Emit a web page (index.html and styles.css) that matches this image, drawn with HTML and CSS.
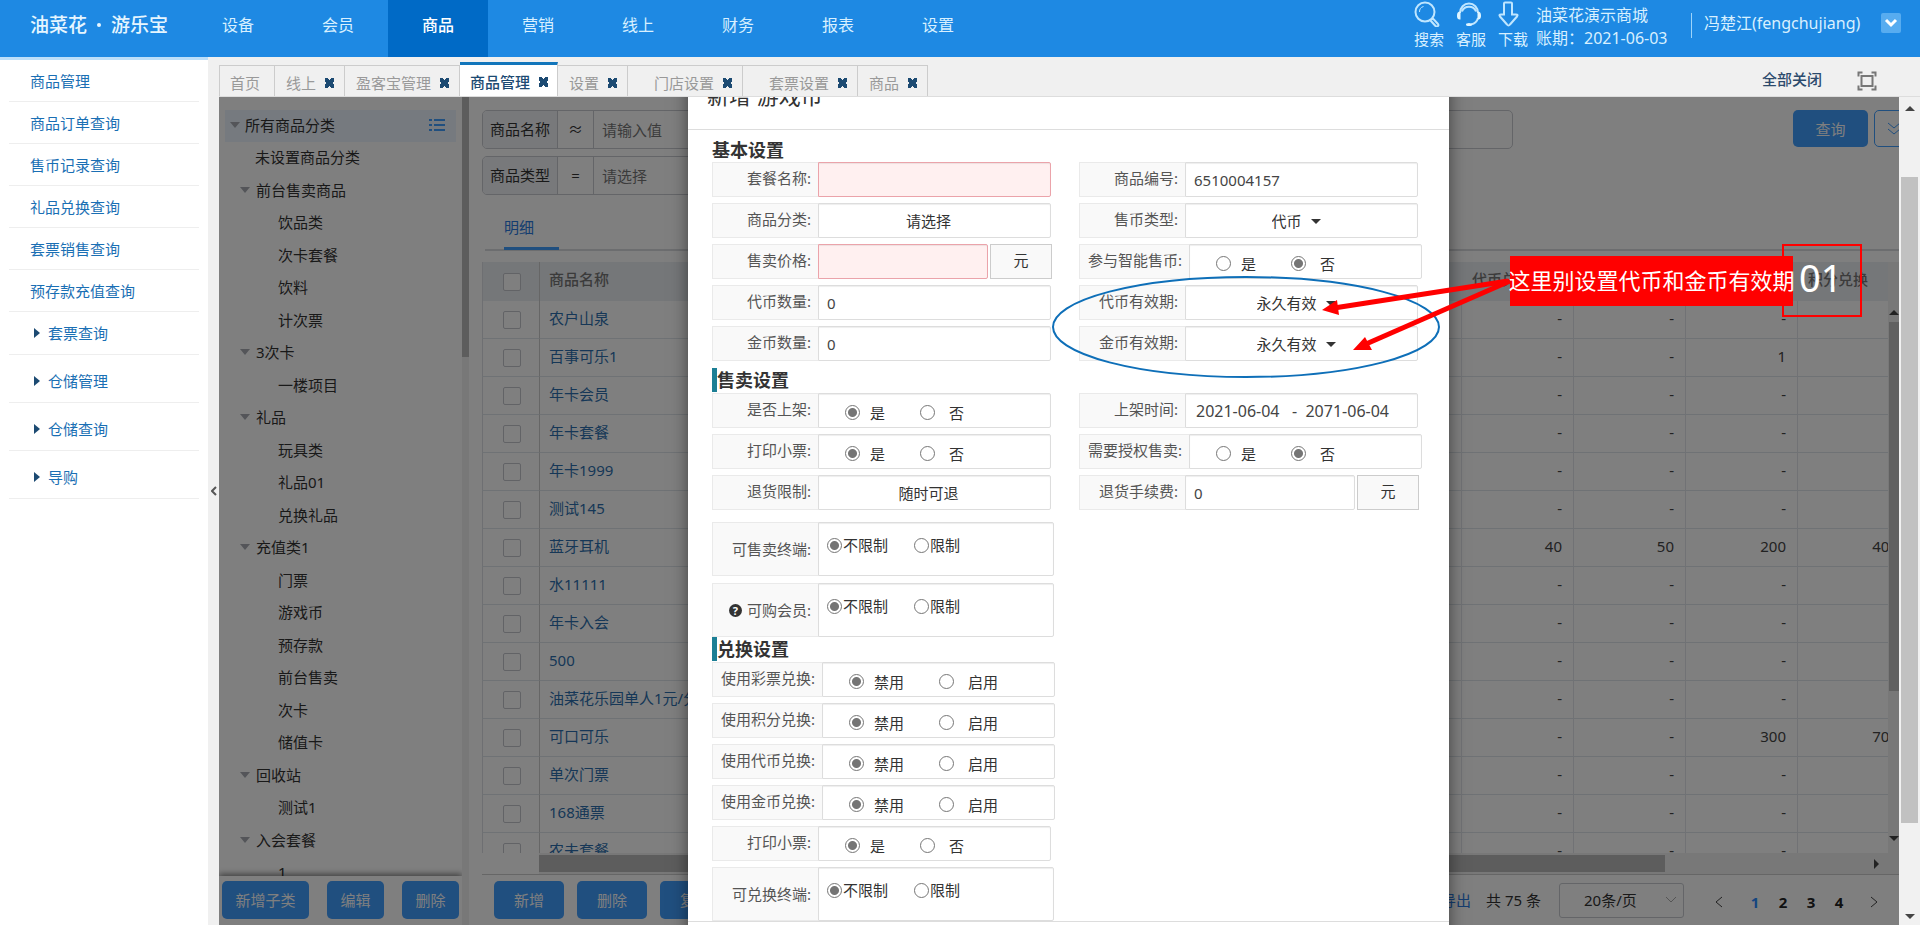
FILE: index.html
```html
<!DOCTYPE html>
<html lang="zh-CN">
<head>
<meta charset="utf-8">
<title>油菜花 · 游乐宝</title>
<link rel="stylesheet" href="styles.css">
</head>
<body>
<header class="topbar">
  <div class="logo"><span>油菜花</span><i class="logo-dot"></i><span>游乐宝</span></div>
  <nav class="mainnav">
    <a href="#">设备</a><a href="#">会员</a><a href="#" class="active">商品</a><a href="#">营销</a><a href="#">线上</a><a href="#">财务</a><a href="#">报表</a><a href="#">设置</a>
  </nav>
  <div class="tools">
    <a href="#"><svg width="26" height="26" viewBox="0 0 26 26"><circle cx="11" cy="11" r="9.5"/><path d="M5.500 11a5.500 5.500 0 0 1 4-5.500" class="thin"/><path d="M16.500 19.500l2.500-2 5 5.500a1.500 1.500 0 0 1-2.500 2z"/></svg>搜索</a>
    <a href="#"><svg width="26" height="26" viewBox="0 0 26 26"><path d="M4 12a9 9.500 0 0 1 18 0M6 10.500a7.500 7.500 0 0 1 14 0M22 17c-1 4-3 5.500-7 6.500"/><path class="solid" d="M4.500 10.500v8C1.500 18.500 1 17 1 14.500s1-4 3.500-4zM21.500 10.500v8c3 0 3.500-1.500 3.500-4s-1-4-3.500-4z"/><ellipse class="solid" cx="13" cy="23.500" rx="3" ry="1.500"/></svg>客服</a>
    <a href="#"><svg width="26" height="26" viewBox="0 0 26 26"><path d="M6 2.500q0-1 1-1h6q1 0 1 1v11h4q2.500 0 1 2l-7 8q-1.500 2-3 0l-7-8q-1.500-2 1-2h3z"/></svg>下载</a>
  </div>
  <div class="store"><span>油菜花演示商城</span><span>账期：2021-06-03</span></div>
  <div class="user">冯楚江(fengchujiang)</div>
  <button class="user-menu" aria-label="用户菜单"><svg width="14" height="10" viewBox="0 0 14 10"><path d="M2 2l5 5 5-5"/></svg></button>
</header>
<div class="page">
  <aside class="sidebar">
    <a href="#">商品管理</a>
    <a href="#">商品订单查询</a>
    <a href="#">售币记录查询</a>
    <a href="#">礼品兑换查询</a>
    <a href="#">套票销售查询</a>
    <a href="#">预存款充值查询</a>
    <a href="#" class="group">套票查询</a>
    <a href="#" class="group tall">仓储管理</a>
    <a href="#" class="group tall">仓储查询</a>
    <a href="#" class="group tall">导购</a>
  </aside>
  <button class="collapse" aria-label="收起菜单"><svg width="6" height="10" viewBox="0 0 6 10"><path d="M5 1L1 5l4 4"/></svg></button>
  <main class="workspace">
    <div class="tabbar">
      <a href="#" class="tab">首页</a>
      <a href="#" class="tab">线上<b class="x"></b></a>
      <a href="#" class="tab">盈客宝管理<b class="x"></b></a>
      <a href="#" class="tab active">商品管理<b class="x"></b></a>
      <a href="#" class="tab">设置<b class="x"></b></a>
      <a href="#" class="tab wide">门店设置<b class="x"></b></a>
      <a href="#" class="tab wide">套票设置<b class="x"></b></a>
      <a href="#" class="tab">商品<b class="x"></b></a>
      <a href="#" class="close-all">全部关闭</a>
      <button class="full" aria-label="全屏"><svg width="20" height="20" viewBox="0 0 20 20"><path d="M1.500 5.500v-4h4M14.500 1.500h4v4M18.500 14.500v4h-4M5.500 18.500h-4v-4"/><rect x="4.500" y="5" width="11" height="10"/></svg></button>
    </div>
    <div class="stage">
      <div class="frame">
        <section class="tree-panel">
          <ul class="tree">
            <li class="root open">所有商品分类<svg width="16" height="14" viewBox="0 0 16 14"><path d="M0 2h3M5 2h11M0 7h3M5 7h11M0 12h3M5 12h11"/></svg></li>
            <li>未设置商品分类</li>
            <li class="open">前台售卖商品</li>
            <li class="leaf">饮品类</li>
            <li class="leaf">次卡套餐</li>
            <li class="leaf">饮料</li>
            <li class="leaf">计次票</li>
            <li class="open">3次卡</li>
            <li class="leaf">一楼项目</li>
            <li class="open">礼品</li>
            <li class="leaf">玩具类</li>
            <li class="leaf">礼品01</li>
            <li class="leaf">兑换礼品</li>
            <li class="open">充值类1</li>
            <li class="leaf">门票</li>
            <li class="leaf">游戏币</li>
            <li class="leaf">预存款</li>
            <li class="leaf">前台售卖</li>
            <li class="leaf">次卡</li>
            <li class="leaf">储值卡</li>
            <li class="open">回收站</li>
            <li class="leaf">测试1</li>
            <li class="open">入会套餐</li>
            <li class="leaf">1</li>
          </ul>
          <div class="tree-actions">
            <button class="btn">新增子类</button><button class="btn">编辑</button><button class="btn">删除</button>
          </div>
        </section>
        <div class="tree-scroll"><i></i></div>
        <section class="list-panel">
          <div class="filters">
            <div class="filter-set">
              <div class="filter"><label for="f1">商品名称</label><span>≈</span><input id="f1" placeholder="请输入值"></div>
              <div class="filter"><input aria-label="关键字"></div>
              <div class="filter"><label for="f2">商品类型</label><span>=</span><input id="f2" placeholder="请选择"></div>
            </div>
            <button class="btn query">查询</button>
            <button class="more" aria-label="展开筛选"><svg width="16" height="14" viewBox="0 0 16 14"><path d="M2 1l6 5 6-5M2 7l6 5 6-5"/></svg></button>
          </div>
          <div class="subtabs"><a href="#">明细</a></div>
          <div class="grid-area">
            <div class="grid-clip">
              <table class="goods">
                <colgroup><col class="c-check"><col class="c-name"><col class="c-num"><col class="c-num"><col class="c-num"><col class="c-num"></colgroup>
                <thead><tr><th><input type="checkbox" aria-label="全选"></th><th>商品名称</th><th>代币兑换</th><th></th><th></th><th>积分兑换</th></tr></thead>
                <tbody>
                  <tr><td><input type="checkbox" aria-label="选择"></td><td><a href="#">农户山泉</a></td><td>-</td><td>-</td><td>-</td><td></td></tr>
                  <tr><td><input type="checkbox" aria-label="选择"></td><td><a href="#">百事可乐1</a></td><td>-</td><td>-</td><td>1</td><td></td></tr>
                  <tr><td><input type="checkbox" aria-label="选择"></td><td><a href="#">年卡会员</a></td><td>-</td><td>-</td><td>-</td><td></td></tr>
                  <tr><td><input type="checkbox" aria-label="选择"></td><td><a href="#">年卡套餐</a></td><td>-</td><td>-</td><td>-</td><td></td></tr>
                  <tr><td><input type="checkbox" aria-label="选择"></td><td><a href="#">年卡1999</a></td><td>-</td><td>-</td><td>-</td><td></td></tr>
                  <tr><td><input type="checkbox" aria-label="选择"></td><td><a href="#">测试145</a></td><td>-</td><td>-</td><td>-</td><td></td></tr>
                  <tr><td><input type="checkbox" aria-label="选择"></td><td><a href="#">蓝牙耳机</a></td><td>40</td><td>50</td><td>200</td><td>400</td></tr>
                  <tr><td><input type="checkbox" aria-label="选择"></td><td><a href="#">水11111</a></td><td>-</td><td>-</td><td>-</td><td></td></tr>
                  <tr><td><input type="checkbox" aria-label="选择"></td><td><a href="#">年卡入会</a></td><td>-</td><td>-</td><td>-</td><td></td></tr>
                  <tr><td><input type="checkbox" aria-label="选择"></td><td><a href="#">500</a></td><td>-</td><td>-</td><td>-</td><td></td></tr>
                  <tr><td><input type="checkbox" aria-label="选择"></td><td><a href="#">油菜花乐园单人1元/分</a></td><td>-</td><td>-</td><td>-</td><td></td></tr>
                  <tr><td><input type="checkbox" aria-label="选择"></td><td><a href="#">可口可乐</a></td><td>-</td><td>-</td><td>300</td><td>700</td></tr>
                  <tr><td><input type="checkbox" aria-label="选择"></td><td><a href="#">单次门票</a></td><td>-</td><td>-</td><td>-</td><td></td></tr>
                  <tr><td><input type="checkbox" aria-label="选择"></td><td><a href="#">168通票</a></td><td>-</td><td>-</td><td>-</td><td></td></tr>
                  <tr><td><input type="checkbox" aria-label="选择"></td><td><a href="#">农夫套餐</a></td><td>-</td><td>-</td><td>-</td><td></td></tr>
                </tbody>
              </table>
            </div>
            <div class="grid-vscroll"><b class="tri up"></b><i></i><b class="tri down"></b></div>
            <div class="grid-hscroll"><i></i><b class="tri right"></b></div>
          </div>
          <div class="list-footer">
            <button class="btn">新增</button><button class="btn">删除</button><button class="btn">复制</button>
            <div class="pager">
              <a href="#" class="export">导出</a>
              <span>共 75 条</span>
              <div class="size"><select aria-label="每页条数"><option>20条/页</option></select><svg width="12" height="8" viewBox="0 0 12 8"><path d="M1 1l5 5 5-5"/></svg></div>
              <button class="arrow" aria-label="上一页"><svg width="8" height="12" viewBox="0 0 8 12"><path d="M7 1L1 6l6 5"/></svg></button>
              <a href="#" class="num on">1</a><a href="#" class="num">2</a><a href="#" class="num">3</a><a href="#" class="num">4</a>
              <button class="arrow" aria-label="下一页"><svg width="8" height="12" viewBox="0 0 8 12"><path d="M1 1l6 5-6 5"/></svg></button>
            </div>
          </div>
        </section>
        <div class="overlay">
          <div class="modal" role="dialog" aria-labelledby="dlg">
            <h2 class="modal-title" id="dlg">新增 游戏币</h2>
            <form class="modal-body">
              <h3 class="plain">基本设置</h3>
              <div class="fields">
                <div class="field"><label for="i1">套餐名称:</label><input id="i1" class="ctl bad"></div>
                <div class="field"><label for="i2">商品编号:</label><input id="i2" class="ctl" value="6510004157"></div>
                <div class="field"><label for="i3">商品分类:</label><div class="ctl pick"><select id="i3"><option>请选择</option></select></div></div>
                <div class="field"><label for="i4">售币类型:</label><div class="ctl pick"><select id="i4"><option>代币</option></select><b class="caret"></b></div></div>
                <div class="field"><label for="i5">售卖价格:</label><input id="i5" class="ctl bad short"><span class="unit">元</span></div>
                <div class="field"><span class="lab">参与智能售币:</span><div class="ctl radios"><label><input type="radio" name="r1">是</label><label><input type="radio" name="r1" checked>否</label></div></div>
                <div class="field"><label for="i6">代币数量:</label><input id="i6" class="ctl" value="0"></div>
                <div class="field"><label for="i7">代币有效期:</label><div class="ctl pick"><select id="i7"><option>永久有效</option></select><b class="caret"></b></div></div>
                <div class="field"><label for="i8">金币数量:</label><input id="i8" class="ctl" value="0"></div>
                <div class="field"><label for="i9">金币有效期:</label><div class="ctl pick"><select id="i9"><option>永久有效</option></select><b class="caret"></b></div></div>
              </div>
              <h3>售卖设置</h3>
              <div class="fields">
                <div class="field"><span class="lab">是否上架:</span><div class="ctl radios"><label><input type="radio" name="r2" checked>是</label><label><input type="radio" name="r2">否</label></div></div>
                <div class="field"><label for="i10">上架时间:</label><input id="i10" class="ctl dates" value="2021-06-04   -  2071-06-04"></div>
                <div class="field"><span class="lab">打印小票:</span><div class="ctl radios"><label><input type="radio" name="r3" checked>是</label><label><input type="radio" name="r3">否</label></div></div>
                <div class="field"><span class="lab">需要授权售卖:</span><div class="ctl radios"><label><input type="radio" name="r4">是</label><label><input type="radio" name="r4" checked>否</label></div></div>
                <div class="field"><label for="i11">退货限制:</label><div class="ctl pick"><select id="i11"><option>随时可退</option></select></div></div>
                <div class="field"><label for="i12">退货手续费:</label><input id="i12" class="ctl short" value="0"><span class="unit">元</span></div>
              </div>
              <div class="fields tall-set">
                <div class="field tall"><span class="lab">可售卖终端:</span><div class="ctl radios"><label><input type="radio" name="r5" checked>不限制</label><label><input type="radio" name="r5">限制</label></div></div>
                <div class="field tall"><span class="lab"><b class="help">?</b>可购会员:</span><div class="ctl radios"><label><input type="radio" name="r6" checked>不限制</label><label><input type="radio" name="r6">限制</label></div></div>
              </div>
              <h3 class="tight">兑换设置</h3>
              <div class="fields single">
                <div class="field"><span class="lab">使用彩票兑换:</span><div class="ctl radios"><label><input type="radio" name="r7" checked>禁用</label><label><input type="radio" name="r7">启用</label></div></div>
                <div class="field"><span class="lab">使用积分兑换:</span><div class="ctl radios"><label><input type="radio" name="r8" checked>禁用</label><label><input type="radio" name="r8">启用</label></div></div>
                <div class="field"><span class="lab">使用代币兑换:</span><div class="ctl radios"><label><input type="radio" name="r9" checked>禁用</label><label><input type="radio" name="r9">启用</label></div></div>
                <div class="field"><span class="lab">使用金币兑换:</span><div class="ctl radios"><label><input type="radio" name="r10" checked>禁用</label><label><input type="radio" name="r10">启用</label></div></div>
                <div class="field"><span class="lab">打印小票:</span><div class="ctl radios"><label><input type="radio" name="r11" checked>是</label><label><input type="radio" name="r11">否</label></div></div>
                <div class="field tall"><span class="lab">可兑换终端:</span><div class="ctl radios"><label><input type="radio" name="r12" checked>不限制</label><label><input type="radio" name="r12">限制</label></div></div>
              </div>
            </form>
            <div class="modal-foot"></div>
            <div class="callout-box">01</div>
            <div class="callout-text">这里别设置代币和金币有效期</div>
            <svg class="callout-art" width="860" height="400" viewBox="0 0 860 400">
              <ellipse cx="558" cy="230" rx="193" ry="50" fill="none" stroke="#0e6fb8" stroke-width="2"/>
              <g stroke="#f00" stroke-width="5" fill="#f00">
                <path d="M820 184L646 211"/><path d="M822 184L678 247"/>
              </g>
              <path fill="#f00" d="M634 213l15-10 2 15zM665 253l12-13 7 13z"/>
            </svg>
          </div>
        </div>
      </div>
      <div class="page-scroll"><b class="tri up"></b><i></i><b class="tri down"></b></div>
    </div>
  </main>
</div>
</body>
</html>
```
FILE: styles.css
```css
* { box-sizing: border-box; }
body {
  margin: 0;
  height: 100vh;
  display: flex;
  flex-direction: column;
  overflow: hidden;
  background: #f0f0f0;
  color: #333;
  font: 15px/20px "Noto Sans", "Noto Sans CJK SC", sans-serif;
}
a { color: inherit; text-decoration: none; }
button, input, select { font: inherit; color: inherit; }
button { padding: 0; border: 0; background: none; }
svg { fill: none; flex: none; }
ul, h2, h3 { margin: 0; padding: 0; }

/* top bar */
.topbar {
  flex: none;
  height: 57px;
  display: flex;
  background: #1e89e3;
  color: #d8f0ff;
  font-size: 16px;
}
.logo {
  width: 188px;
  height: 50px;
  padding-left: 30px;
  display: flex;
  align-items: center;
  gap: 10px;
  font-size: 19px;
  font-weight: 500;
  color: #e6f6ff;
}
.logo-dot { width: 4px; height: 4px; border-radius: 2px; background: #e6f6ff; }
.mainnav { display: flex; }
.mainnav a { width: 100px; padding-top: 15px; text-align: center; }
.mainnav .active { background: #006ac6; color: #fff; font-weight: 500; }
.tools { margin-left: auto; display: flex; gap: 12px; font-size: 15px; }
.tools a { width: 30px; padding-top: 1px; line-height: 24px; white-space: nowrap; }
.tools svg { display: block; stroke: #bfe6ff; stroke-width: 2; }
.tools .thin { stroke-width: 1; }
.tools .solid { fill: #e0f5ff; stroke: none; }
.store { margin-left: 8px; padding-top: 4px; width: 155px; display: flex; flex-direction: column; line-height: 23px; white-space: nowrap; }
.user { height: 25px; margin-top: 13px; padding-left: 12px; width: 190px; border-left: 1px solid #9dd4fa; line-height: 21px; white-space: nowrap; }
.user-menu { width: 20px; height: 20px; margin: 13px 19px 0 0; background: #57acf0; border-radius: 2px; }
.user-menu svg { display: block; margin: 0 auto; stroke: #fff; stroke-width: 3; }

/* side menu */
.page { flex: 1; min-height: 0; display: flex; }
.sidebar { width: 208px; padding: 0 9px; background: #fff; border-top: 3px solid #bcdffa; }
.sidebar a {
  display: flex;
  align-items: center;
  height: 42px;
  padding-left: 21px;
  border-bottom: 1px solid #eee;
  color: #1a6fb4;
}
.sidebar .group { height: 43px; }
.sidebar .tall { height: 48px; padding-top: 5px; }
.sidebar .group::before {
  content: "";
  margin: 0 8px 0 4px;
  border: 5px solid transparent;
  border-left: 6px solid #1c4a72;
  border-right: 0;
}
.collapse { width: 11px; display: flex; align-items: center; justify-content: center; }
.collapse svg { stroke: #555; stroke-width: 2; }

/* window tabs */
.workspace { flex: 1; min-width: 0; display: flex; flex-direction: column; }
.tabbar { flex: none; height: 40px; display: flex; align-items: flex-end; border-bottom: 1px solid #ddd; }
.tab {
  height: 31px;
  display: flex;
  align-items: center;
  gap: 9px;
  padding: 4px 10px 0 11px;
  border: 1px solid #ccc;
  border-left-width: 0;
  border-bottom: 0;
  color: #999;
  white-space: nowrap;
}
.tab:first-child { border-left-width: 1px; padding: 4px 14px 0 10px; }
.tab.wide { padding-left: 26px; }
.tab.active { height: 34px; padding: 3px 9px 0 10px; border-top: 3px solid #1276bb; background: #fff; color: #1c4a72; font-weight: 500; }
.x { width: 9px; height: 10px; background: linear-gradient(45deg, transparent 36%, #1c4a72 36% 64%, transparent 64%), linear-gradient(-45deg, transparent 36%, #1c4a72 36% 64%, transparent 64%); }
.close-all { margin: 0 35px 7px auto; color: #2c4a6c; font-weight: 500; }
.full { width: 20px; height: 20px; margin: 0 43px 5px 0; }
.full svg { display: block; stroke: #777; stroke-width: 2; }

/* framed page and its scroll bar */
.stage { flex: 1; min-height: 0; display: flex; }
.frame { position: relative; flex: 1; min-width: 0; display: flex; overflow: hidden; background: #fff; }
.page-scroll { width: 21px; padding: 9px 2px 6px; display: flex; flex-direction: column; align-items: center; background: #f1f1f1; }
.page-scroll i { flex: 1; width: 17px; margin: 66px 0 91px; background: #c1c1c1; }
.tri { border: 5px solid transparent; }
.tri.up { border-top-width: 0; border-bottom-color: #444; }
.tri.down { border-bottom-width: 0; border-top-color: #444; }
.tri.right { border-right-width: 0; border-left-color: #444; }

/* category tree */
.tree-panel { flex: none; width: 243px; display: flex; flex-direction: column; }
.tree { flex: 1; min-height: 0; overflow: hidden; padding: 13px 6px 0; list-style: none; }
.tree li { display: flex; align-items: center; height: 32px; padding: 0 0 3px 30px; }
.tree li:nth-child(even) { height: 33px; }
.tree .leaf { padding-left: 53px; }
.tree .open { padding-left: 15px; }
.tree .open::before { content: ""; margin-right: 6px; border: 5px solid transparent; border-top: 6px solid #a8abb2; border-bottom: 0; }
.tree .root { padding-left: 5px; padding-bottom: 2px; background: #ecf5ff; }
.tree .root::before { margin-right: 5px; }
.tree .root svg { margin: 0 11px 0 auto; stroke: #409eff; stroke-width: 2; }
.tree-actions { flex: none; height: 49px; display: flex; gap: 18px; padding: 5px 3px 6px; box-shadow: 0 -2px 6px rgba(0, 0, 0, .5); background: #fff; }
.btn { height: 38px; padding: 0 13px; border-radius: 5px; background: #409eff; color: #fff; }
.tree-actions .btn { flex: auto; }
.tree-scroll { flex: none; width: 7px; background: #f0f0f0; }
.tree-scroll i { display: block; height: 260px; background: #bbb; }

/* list */
.list-panel { flex: 1; min-width: 0; display: flex; flex-direction: column; padding-left: 13px; }
.filters { display: flex; margin: 13px -15px 0 0; }
.filter-set { width: 1031px; flex: none; display: grid; grid-template-columns: 1fr 1fr; gap: 7px 15px; }
.filter { height: 39px; display: flex; border: 1px solid #c8cad0; border-radius: 5px; overflow: hidden; }
.filter label { width: 75px; padding-top: 8px; text-align: center; background: #f0f2f6; border-right: 1px solid #c8cad0; }
.filter span { width: 36px; padding-top: 8px; text-align: center; border-right: 1px solid #c8cad0; }
.filter input { flex: 1; min-width: 0; padding: 0 8px; border: 0; background: none; }
.filter input::placeholder { color: #777; opacity: 1; }
.query { width: 75px; height: 37px; margin: 0 6px 0 auto; }
.more { width: 40px; height: 37px; border: 1px solid #409eff; border-radius: 5px; }
.more svg { display: block; margin: 0 auto; stroke: #409eff; stroke-width: 1; }
.subtabs { display: flex; margin: 20px 0 11px 3px; padding-left: 19px; border-bottom: 2px solid #d8dade; }
.subtabs a { height: 35px; width: 55px; padding-top: 2px; margin-bottom: -1px; border-bottom: 3px solid #409eff; color: #2a7be0; }
.grid-area { flex: 1; min-height: 0; display: grid; grid-template: minmax(0, 1fr) 21px / minmax(0, 1fr) 11px; border-bottom: 1px solid #ccc; }
.grid-clip { overflow: hidden; }
.goods { table-layout: fixed; width: 1428px; border-collapse: separate; border-spacing: 0; }
.c-check { width: 58px; }
.c-name { width: 922px; }
.c-num { width: 112px; }
.goods th { height: 39px; padding: 0 10px 5px; text-align: left; font-weight: 500; background: #ebeef3; color: #777; }
.goods td { height: 38px; padding: 0 11px 3px; text-align: right; border-bottom: 1px solid #dfe4ea; border-right: 1px solid #e2e5ea; color: #444; }
.goods td:nth-child(2) { padding-left: 9px; text-align: left; color: #2d6fae; }
.goods th:nth-child(2) { padding-left: 9px; }
.goods tr > :first-child { padding: 0 0 0 20px; text-align: left; border-right: 1px solid #ccc; border-left: 1px solid #dcdfe4; }
.goods input { appearance: none; display: block; width: 18px; height: 18px; margin: 0; border: 1px solid #c4c7cd; border-radius: 2px; background: #fff; }
.grid-vscroll { display: flex; flex-direction: column; align-items: flex-end; padding: 48px 0 12px; background: #f0f0f0; }
.grid-vscroll i { flex: 1; width: 10px; margin: 7px 0 145px; background: #c1c1c1; }
.grid-hscroll { grid-column: 1 / -1; display: flex; align-items: center; margin-left: 57px; padding: 2px 20px 2px 0; background: #f0f0f0; }
.grid-hscroll i { width: 84%; height: 17px; margin-right: auto; background: #bbb; }
.list-footer { flex: none; height: 50px; display: flex; align-items: center; gap: 13px; padding-left: 12px; }
.list-footer .btn { width: 70px; }
.pager { margin-left: auto; display: flex; align-items: center; padding-right: 19px; }
.pager .export { color: #2a7be0; margin-right: 15px; }
.size { position: relative; width: 125px; height: 35px; margin: 0 31px 0 18px; }
.size select { appearance: none; width: 100%; height: 100%; padding: 0 24px; border: 1px solid #c8cad0; border-radius: 3px; background: none; }
.size svg { position: absolute; right: 7px; top: 13px; stroke: #aaa; }
.arrow svg { display: block; stroke: #444; stroke-width: 1; }
.arrow { width: 10px; padding-top: 3px; }
.num { width: 28px; padding-top: 4px; text-align: center; font-weight: 700; color: #222; }
.num.on { margin-left: 16px; color: #2a8bff; }
.num + .arrow { margin-left: 17px; }

/* dialog */
.overlay { position: absolute; inset: 0; display: flex; justify-content: center; align-items: flex-start; padding-left: 19px; background: rgba(0, 0, 0, .5); }
.modal { position: relative; flex: none; width: 761px; margin-top: -40px; background: #fff; box-shadow: 0 5px 16px rgba(0, 0, 0, .5); }
.modal-title { height: 73px; padding: 22px 19px 0; line-height: 32px; font-size: 22px; font-weight: 400; border-bottom: 1px solid #ddd; }
.modal-body { padding: 8px 24px 0; }
.modal-foot { height: 60px; border-top: 1px solid #ddd; }
.modal h3 { height: 24px; line-height: 24px; margin: 7px 0 1px; border-left: 5px solid #1c7f95; font-size: 18px; }
.modal h3.plain { margin: 0; border-left: 0; }
.modal h3.tight { margin-top: 0; }
.fields { display: grid; grid-template-columns: 367px 1fr; gap: 6px 0; }
.fields.tall-set { grid-template-columns: 1fr; gap: 7px; margin-top: 12px; }
.fields.single { grid-template-columns: 1fr; }
.field { display: flex; height: 35px; }
.field.tall { height: 54px; }
.field > label, .lab {
  min-width: 106px;
  padding: 0 7px 3px 8px;
  display: flex;
  align-items: center;
  justify-content: flex-end;
  background: #f9f9f9;
  border: 1px solid #eaeaea;
  border-right: 0;
  color: #555;
}
.tall .lab { padding-bottom: 0; }
.ctl { width: 233px; border: 1px solid #ddd; border-radius: 0 2px 2px 0; background: #fff; box-shadow: inset 0 1px 1px rgba(0, 0, 0, .07); }
input.ctl { padding: 0 8px; color: #444; }
input.dates { padding: 0 10px; font-size: 16px; }
.ctl.bad { background: #fff0f0; border-color: #eba3aa; }
.ctl.short { width: 170px; }
.tall .ctl { width: 236px; }
.unit { width: 62px; margin-left: 2px; padding-top: 5px; text-align: center; background: #f9f9f9; border: 1px solid #ccc; }
.pick { display: flex; align-items: center; justify-content: center; gap: 8px; padding-right: 11px; }
.pick select { appearance: none; padding: 0; border: 0; background: none; }
.caret { margin-top: 2px; border: 5px solid transparent; border-top-color: #333; border-bottom: 0; }
.radios { display: flex; align-items: center; gap: 35px; padding: 4px 0 0 26px; }
.radios label { display: flex; align-items: center; gap: 10px; }
.radios label + label { gap: 14px; }
.radios input { appearance: none; width: 15px; height: 15px; margin: 0; border: 1px solid #767676; border-radius: 50%; background: #fff; }
.radios input:checked { background: radial-gradient(circle, #757575 0 4px, #fff 5px); }
.tall .radios { gap: 26px; padding: 0 0 8px 8px; }
.tall .radios label { gap: 1px; }
.help { width: 13px; height: 13px; margin-right: 5px; border-radius: 50%; background: #333; color: #fff; font-size: 11px; line-height: 13px; text-align: center; }

/* notes drawn over the dialog */
.callout-art { position: absolute; left: 0; top: 40px; pointer-events: none; }
.callout-text { position: absolute; left: 822px; top: 199px; width: 283px; height: 50px; padding-bottom: 2px; display: flex; align-items: center; justify-content: center; background: #f00; color: #fff; font-size: 22px; white-space: nowrap; }
.callout-box { position: absolute; left: 1094px; top: 187px; width: 80px; height: 73px; padding-left: 15px; border: 2px solid #f00; color: #fff; font-size: 38px; line-height: 62px; }
```
